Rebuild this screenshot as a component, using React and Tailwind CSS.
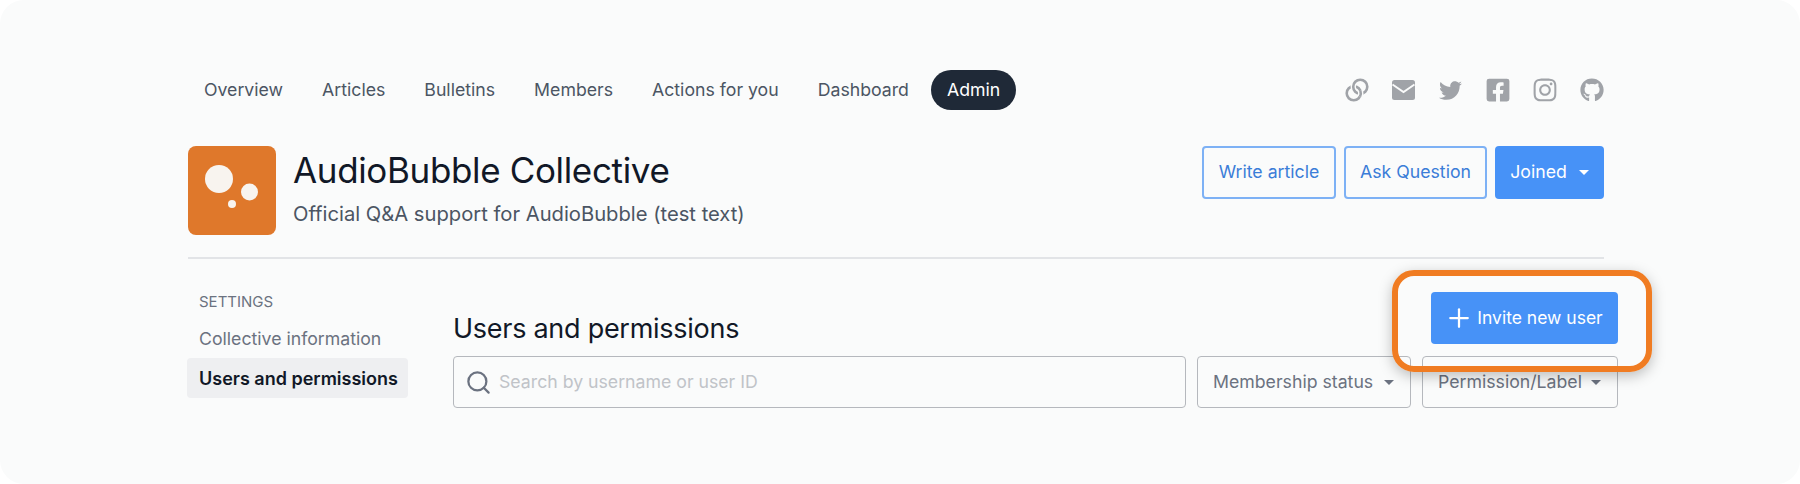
import { Plus, Search } from 'lucide-react';
import { FaFacebookSquare, FaGithub, FaInstagram, FaTwitter } from 'react-icons/fa';

const tabs = ['Overview', 'Articles', 'Bulletins', 'Members', 'Actions for you', 'Dashboard'];

function Caret({ className }) {
  return <span className={`inline-block w-0 h-0 border-x-[5px] border-x-transparent border-t-[5px] ${className}`} />;
}

// two rings woven into each other
function LinkIcon() {
  return (
    <svg width="26" height="26" className="shrink-0" viewBox="0 0 24 24" fill="none" stroke="#a0a3a8" strokeWidth="2.4">
      <circle cx="9" cy="15" r="6.500" />
      <path d="M8.890 11.220 A6.500 6.500 0 0 1 9.260 5.950" stroke="#fafbfb" strokeWidth="5" />
      <circle cx="15" cy="9" r="6.500" />
      <path d="M15.110 12.780 A6.500 6.500 0 0 1 14.740 18.050" stroke="#fafbfb" strokeWidth="5" />
      <path d="M15.110 12.780 A6.500 6.500 0 0 1 14.740 18.050" />
    </svg>
  );
}

function MailIcon() {
  return (
    <svg width="23" height="20" viewBox="0 0 23 20">
      <rect width="23" height="20" rx="2.500" fill="#a0a3a8" />
      <path d="M0.500 4.500 L11.500 12 L22.500 4.500" fill="none" stroke="#fafbfb" strokeWidth="2" />
    </svg>
  );
}

function Social({ children }) {
  return <span className="w-[23px] flex items-center justify-center">{children}</span>;
}

function Filter({ label, className }) {
  return (
    <button className={`h-[52px] flex items-center justify-between pl-[15px] pr-4 border border-[#b5b8bd] rounded-[4px] text-[17.7px] text-[#6b7280] ${className}`}>
      {label}
      <Caret className="border-t-[#6b7280]" />
    </button>
  );
}

export default function App() {
  return (
    <div className="h-[484px] bg-white overflow-hidden font-['Inter',sans-serif]">
      <div className="h-full bg-[#fafbfb] rounded-[24px] pt-[70px] pl-[188px] relative">
        <div className="w-[1416px]">
          <div className="flex items-center justify-between">
            <nav className="flex items-center pl-4 gap-[39px] text-[17.7px] text-[#4b5563]">
              {tabs.map((t) => (
                <a key={t}>{t}</a>
              ))}
              <a className="h-[40px] px-4 -ml-[17px] flex items-center rounded-full bg-[#1f2937] text-white">Admin</a>
            </nav>
            <div className="flex items-center gap-[24px] pr-[1px] text-[#a0a3a8]">
              <Social><LinkIcon /></Social>
              <Social><MailIcon /></Social>
              <Social><FaTwitter className="text-[23px]" /></Social>
              <Social><FaFacebookSquare className="text-[26px] shrink-0" /></Social>
              <Social><FaInstagram className="text-[26px] shrink-0" /></Social>
              <Social><FaGithub className="text-[24px] shrink-0" /></Social>
            </div>
          </div>

          <div className="flex items-center mt-[36px]">
            <div className="w-[88px] h-[89px] rounded-[8px] bg-[#df782b] shrink-0">
              <svg width="88" height="89" viewBox="0 0 88 89">
                <circle cx="31" cy="33" r="14" fill="#f8f4ef" />
                <circle cx="61.500" cy="46" r="8.500" fill="#f8f4ef" />
                <circle cx="44" cy="58" r="4" fill="#f8f4ef" />
              </svg>
            </div>
            <div className="ml-[17px] flex-1">
              <h1 className="text-[35px] leading-[40px] tracking-[-0.01em] text-[#111827] mt-[-4px]">AudioBubble Collective</h1>
              <p className="text-[20.2px] leading-[26px] text-[#4b5563] mt-[11px]">Official Q&amp;A support for AudioBubble (test text)</p>
            </div>
            <div className="flex gap-2 self-start text-[17.7px]">
              <button className="w-[134px] h-[53px] border-2 border-[#7db1f5] rounded-[4px] text-[#3b7dd8]">Write article</button>
              <button className="w-[143px] h-[53px] border-2 border-[#7db1f5] rounded-[4px] text-[#3b7dd8]">Ask Question</button>
              <button className="w-[109px] h-[53px] rounded-[4px] bg-[#4792f7] text-white flex items-center justify-center gap-[12px]">
                Joined
                <Caret className="border-t-white" />
              </button>
            </div>
          </div>

          <div className="mt-[22px] h-[2px] bg-[#e2e4e7]" />
        </div>

        <div className="flex w-[1430px] mt-[33px]">
          <aside className="w-[221px] -ml-[1px] shrink-0 text-[17.7px]">
            <p className="pl-[12px] text-[15px] leading-[20px] text-[#6b7280] uppercase">Settings</p>
            <a className="block pl-[12px] mt-[15px] leading-[24px] text-[#6b7280]">Collective information</a>
            <a className="flex items-center pl-[12px] mt-[7px] h-[40px] rounded-[4px] bg-[#eeeff1] text-[18px] font-semibold text-[#111827]">Users and permissions</a>
          </aside>

          <main className="ml-[45px] flex-1">
            <div className="flex items-end justify-between">
              <h2 className="text-[27px] leading-[34px] tracking-[-0.01em] text-[#111827] -mb-[2px]">Users and permissions</h2>
              <button className="w-[187px] h-[52px] rounded-[4px] bg-[#4792f7] text-white text-[17.5px] flex items-center justify-center gap-[3px] pr-[2px]">
                <Plus size={30} strokeWidth={1.8} />
                Invite new user
              </button>
            </div>
            <div className="flex gap-[11px] mt-[12px]">
              <div className="flex-1 h-[52px] flex items-center gap-[7px] px-[11px] border border-[#b5b8bd] rounded-[4px]">
                <Search size={27} strokeWidth={2} className="text-[#6b7280]" />
                <input placeholder="Search by username or user ID" className="flex-1 bg-transparent outline-none text-[17.7px] placeholder:text-[#c0c3c8]" />
              </div>
              <Filter label="Membership status" className="w-[214px]" />
              <Filter label="Permission/Label" className="w-[196px]" />
            </div>
          </main>
        </div>

        <div className="absolute left-[1392px] top-[270px] w-[260px] h-[102px] border-[6px] border-[#f07c22] rounded-[22px] shadow-[0_4px_14px_rgba(0,0,0,0.25)]" />
      </div>
    </div>
  );
}
